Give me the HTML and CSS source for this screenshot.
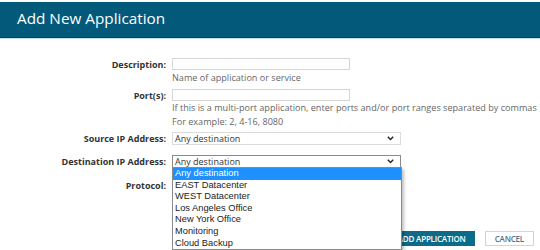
FILE: index.html
```html
<!DOCTYPE html>
<html>
<head>
<meta charset="utf-8">
<link rel="stylesheet" href="styles.css">
</head>
<body>
<header class="hdr"><h1 class="title">Add New Application</h1></header>
<main class="form">
  <div class="row r-desc">
    <label class="lbl">Description:</label>
    <div class="fld">
      <div class="txt"></div>
      <div class="hint">Name of application or service</div>
    </div>
  </div>
  <div class="row r-port">
    <label class="lbl">Port(s):</label>
    <div class="fld">
      <div class="txt"></div>
      <div class="hint nowrap">If this is a multi-port application, enter ports and/or port ranges separated by commas</div>
      <div class="hint">For example: 2, 4-16, 8080</div>
    </div>
  </div>
  <div class="row r-src">
    <label class="lbl">Source IP Address:</label>
    <div class="fld">
      <div class="sel"><span>Any destination</span><svg class="chev" width="7" height="5" viewBox="0 0 7 5"><path d="M0.8 0.8 L3.5 3.6 L6.2 0.8" fill="none" stroke="#222" stroke-width="1.4"/></svg></div>
    </div>
  </div>
  <div class="row r-dst">
    <label class="lbl">Destination IP Address:</label>
    <div class="fld">
      <div class="sel focus"><span>Any destination</span><svg class="chev" width="7" height="5" viewBox="0 0 7 5"><path d="M0.8 0.8 L3.5 3.6 L6.2 0.8" fill="none" stroke="#222" stroke-width="1.4"/></svg>
        <ul class="drop">
          <li class="on">Any destination</li>
          <li>EAST Datacenter</li>
          <li>WEST Datacenter</li>
          <li>Los Angeles Office</li>
          <li>New York Office</li>
          <li>Monitoring</li>
          <li>Cloud Backup</li>
        </ul>
      </div>
    </div>
  </div>
  <div class="row r-proto">
    <label class="lbl">Protocol:</label>
    <div class="fld"></div>
  </div>
  <div class="actions">
    <button class="btn primary">ADD APPLICATION</button>
    <button class="btn ghost">CANCEL</button>
  </div>
</main>
</body>
</html>
```
FILE: styles.css
```css
* { box-sizing: border-box; }
html, body { margin: 0; padding: 0; background: #fff; overflow: hidden; }
body { width: 540px; height: 250px; font-family: "Open Sans", sans-serif; color: #333; }
.hdr {
  margin-top: 2px;
  height: 36px;
  background: #03597a;
  border-bottom: 1px solid #0c3f55;
  box-shadow: 0 1px 0 #bfe0ee;
  display: flex;
  align-items: center;
  padding-left: 17px;
}
.title { margin: 0; font-size: 15.3px; font-weight: 400; color: #fff; line-height: 1; padding-bottom: 1px; }
.form { padding-top: 20px; display: flex; flex-direction: column; }
.row { display: grid; grid-template-columns: 166px 1fr; column-gap: 6px; }
.lbl { text-align: right; font-weight: 700; font-size: 9px; line-height: 13px; color: #333; white-space: nowrap; }
.fld { position: relative; }
.txt { width: 178px; height: 12px; border: 1px solid #d6d6d6; }
.hint { font-size: 9.1px; line-height: 14px; color: #666; white-space: nowrap; }
.r-desc .hint { margin-top: 1px; }
.r-port { margin-top: 4px; }
.r-src { margin-top: 3px; }
.r-dst { margin-top: 10px; }
.r-proto { margin-top: 11px; }
.sel {
  position: relative;
  width: 229px; height: 13px;
  border: 1px solid #dcdcdc;
  display: flex; align-items: center; justify-content: space-between;
  padding: 0 6px 0 2px;
  font-size: 9px; line-height: 11px; color: #333;
}
.sel.focus { border-color: #8a8a8a; }
.chev { display: block; }
.drop {
  position: absolute; left: -1px; top: 11px;
  width: 230px;
  margin: 0; padding: 0; list-style: none;
  background: #fff;
  border: 1px solid #8a8a8a;
  box-shadow: 2px 2px 3px rgba(0,0,0,0.25);
  font-family: "Liberation Sans", Arial, sans-serif; font-size: 9.3px; color: #222;
  z-index: 5;
}
.drop li { height: 11.6px; line-height: 11.6px; padding-left: 2px; }
.drop li.on { background: #1e90ff; color: #fff; }
.actions { display: flex; justify-content: flex-end; gap: 9px; padding-right: 6px; margin-top: 39px; }
.btn {
  font-family: "Open Sans", sans-serif; font-weight: 600; font-size: 8px;
  height: 15px; padding: 0 8px; border: 1px solid transparent; letter-spacing: -0.2px;
  line-height: 13px;
}
.primary { background: #0b6b88; color: #fff; margin-right: 1px; }
.ghost { background: #fff; color: #55718a; border-color: #cfd6db; padding: 0 9px; }
```
